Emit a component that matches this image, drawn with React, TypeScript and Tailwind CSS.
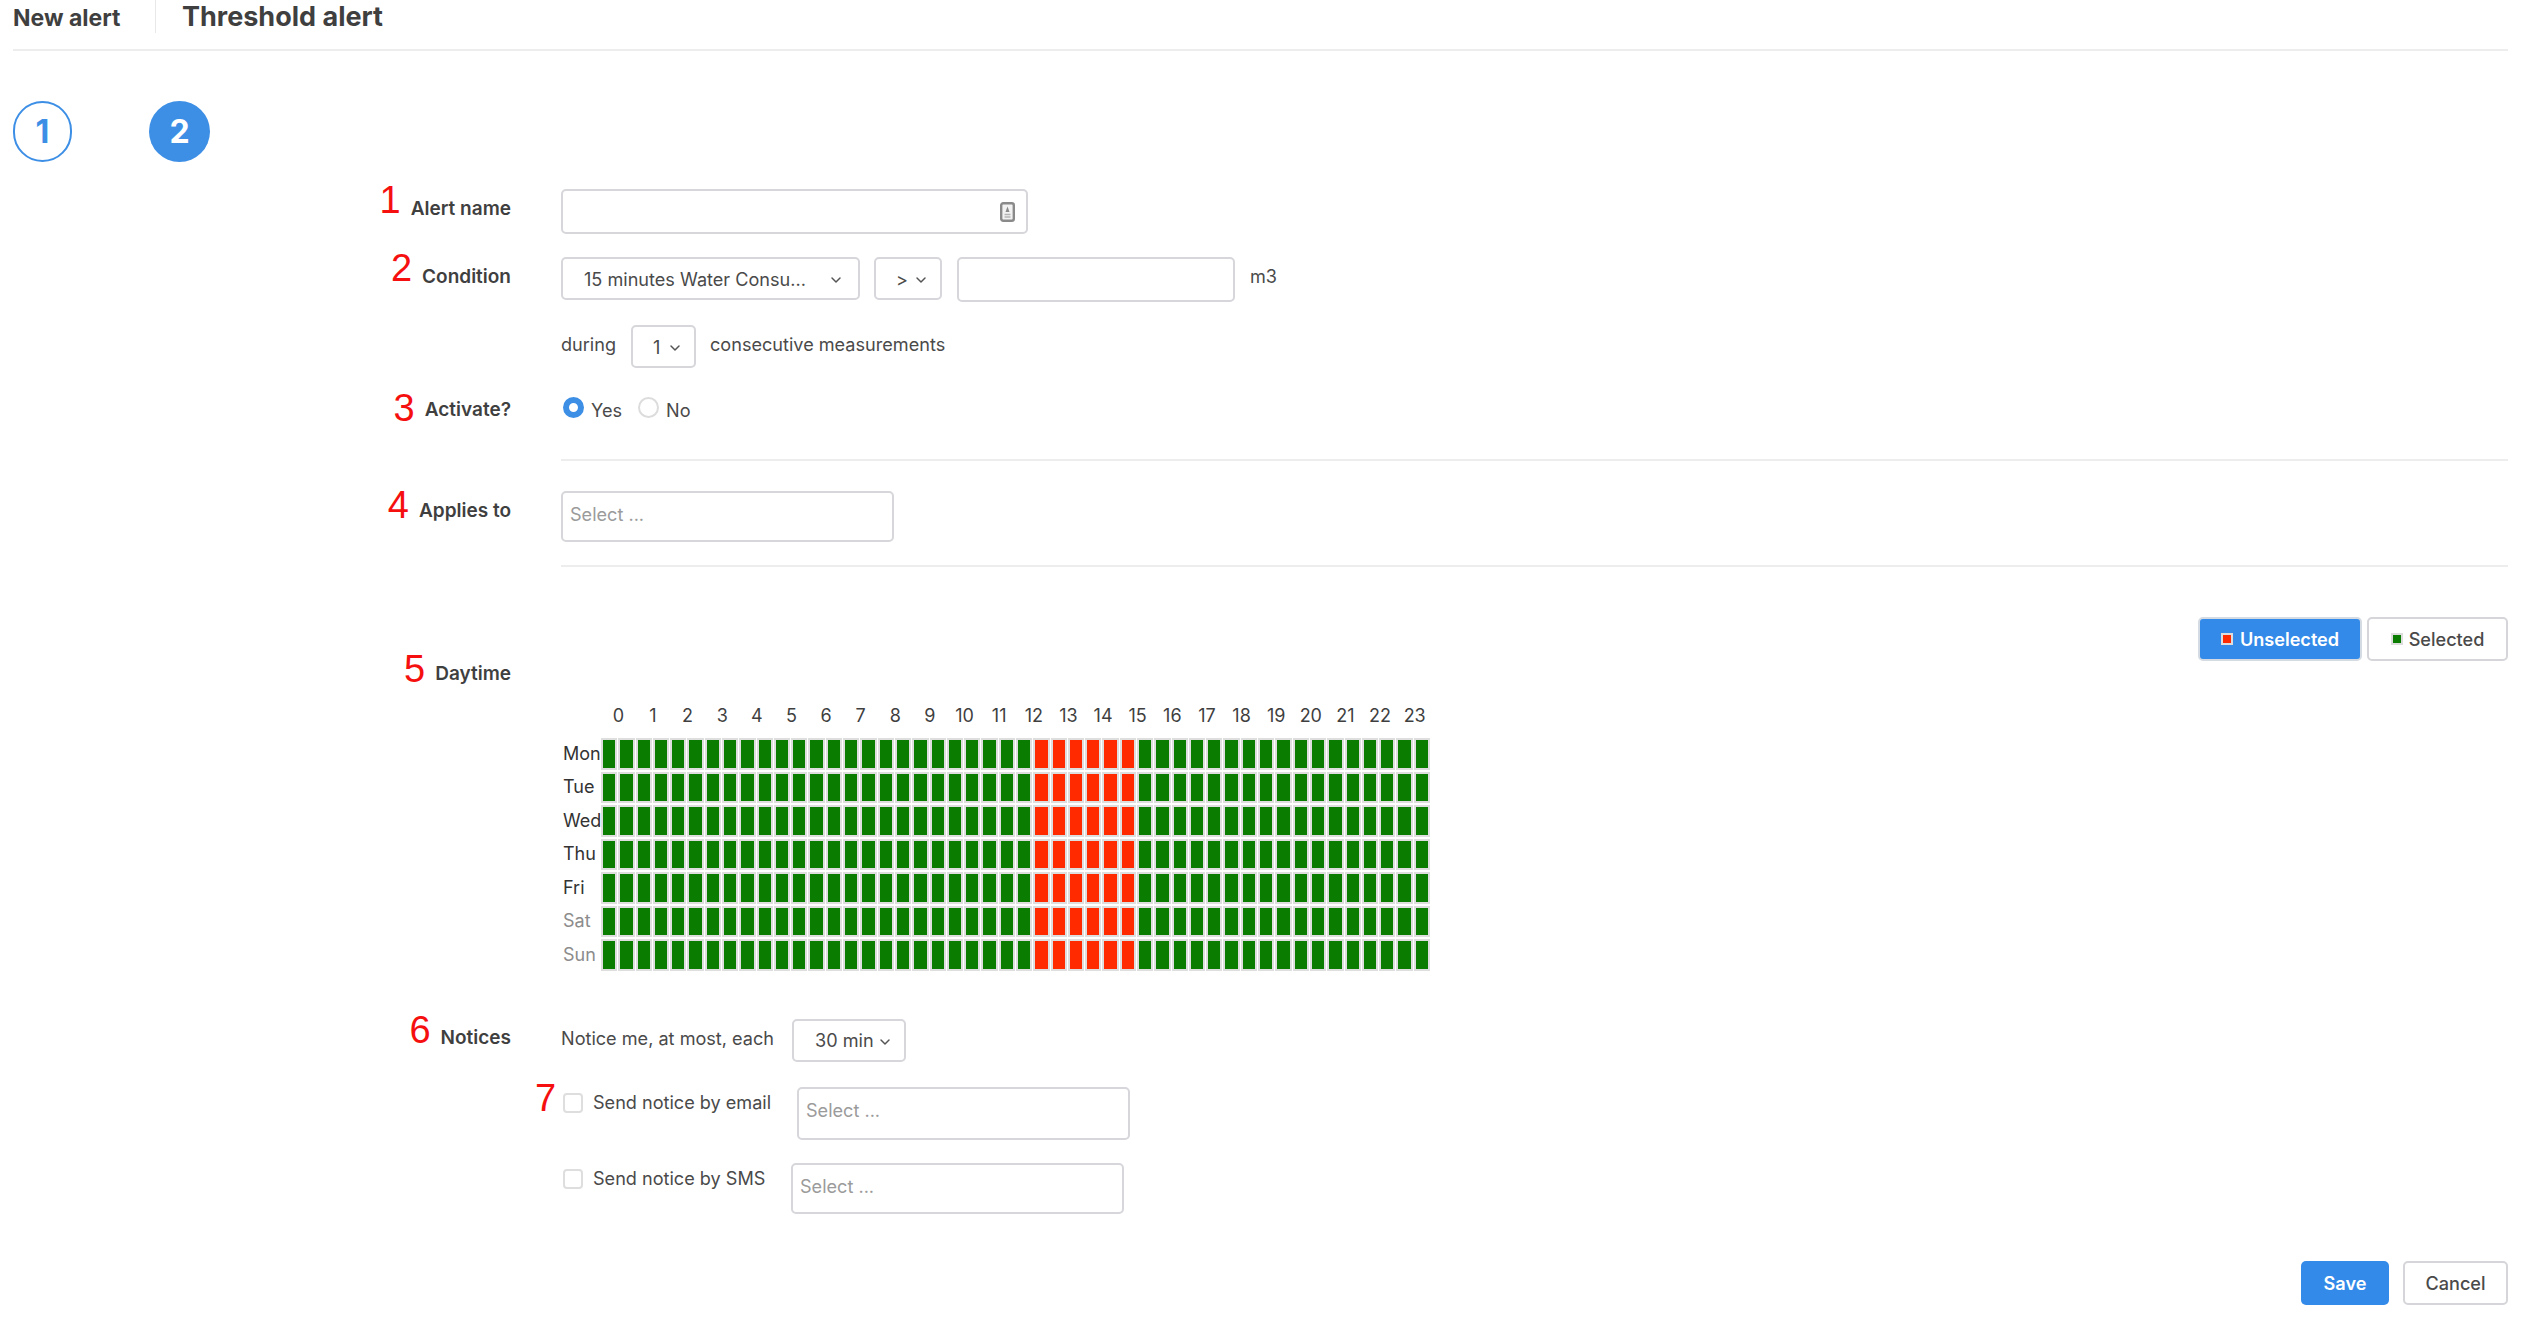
import React from "react";
import { ChevronDown } from "lucide-react";

const inputBox = "rounded-[5px] border-2 border-[#d6d6db] bg-white";

function Label({ n, text, numClass, textClass }: { n: string; text: string; numClass: string; textClass: string }) {
  return (
    <div className="flex w-[498px] shrink-0 items-start justify-end">
      <span className={`text-[38px] leading-[38px] text-[#f50f0f] [font-family:'Liberation_Sans',sans-serif] ${numClass}`}>{n}</span>
      <span className={`ml-[10px] text-[19px] leading-[24px] font-semibold text-[#3f3f3f] ${textClass}`}>{text}</span>
    </div>
  );
}

function Select({ value, className }: { value: string; className: string }) {
  return (
    <div className={`flex items-center ${inputBox} ${className}`}>
      <span className="truncate">{value}</span>
      <ChevronDown className="ml-auto mt-[3px] shrink-0 text-[#555]" size={16} strokeWidth={2.2} />
    </div>
  );
}

function Placeholder({ className }: { className: string }) {
  return (
    <div className={`pl-[7px] pt-[9px] leading-[24px] text-[#9b9b9b] ${inputBox} ${className}`}>Select ...</div>
  );
}

const days = ["Mon", "Tue", "Wed", "Thu", "Fri", "Sat", "Sun"];
const hours = Array.from({ length: 24 }, (_, i) => i);
const halfHours = Array.from({ length: 48 }, (_, i) => i);

function Schedule() {
  return (
    <div className="ml-[2px] w-[869px] text-[18px]">
      <div className="ml-[38px] grid h-[32px] grid-cols-24 items-center text-center leading-[24px] text-[#3f3f3f]">
        {hours.map((h) => (
          <span key={h}>{h}</span>
        ))}
      </div>
      <div className="mt-[6px] flex">
        <div className="grid w-[38px] grid-rows-7 gap-y-[2px] leading-[24px]">
          {days.map((d, i) => (
            <span key={d} className={`flex h-[31.5px] items-center whitespace-nowrap ${i > 4 ? "text-[#8c8c8c]" : "text-[#333]"}`}>{d}</span>
          ))}
        </div>
        <div className="grid w-[829px] grid-cols-48 gap-x-px gap-y-[2px]">
          {days.flatMap((d) =>
            halfHours.map((c) => (
              <div
                key={`${d}-${c}`}
                className={`h-[31.5px] border-2 border-[#dedede] ${c >= 25 && c <= 30 ? "bg-[#ff2a00]" : "bg-[#0a7c00]"}`}
              />
            ))
          )}
        </div>
      </div>
    </div>
  );
}

export default function App() {
  return (
    <div className="h-[1324px] w-full overflow-hidden bg-white pl-[13px] pr-[14px] text-[18.1px] leading-[24px] text-[#4a4a4a] [font-family:Inter,sans-serif]">
      <header className="flex h-[51px] items-start border-b-2 border-[#ededed]">
        <h2 className="mt-[5px] w-[142px] text-[23px] leading-[26px] font-bold text-[#3f3f3f]">New alert</h2>
        <div className="h-[33px] w-px bg-[#e8e8e8]" />
        <h1 className="ml-[26px] mt-[2px] text-[27px] leading-[30px] font-bold text-[#3f3f3f]">Threshold alert</h1>
      </header>

      <div className="mt-[50px] flex gap-[77px]">
        <div className="flex h-[61px] w-[59px] items-center justify-center rounded-full border-2 border-[#3d8fe6] text-[32px] font-bold text-[#3d8fe6]">1</div>
        <div className="flex h-[61px] w-[61px] items-center justify-center rounded-full bg-[#3d8fe6] text-[32px] font-bold text-white">2</div>
      </div>

      <div className="mt-[27px] flex">
        <Label n="1" text="Alert name" numClass="-mt-[8px]" textClass="mt-[8px]" />
        <div className="ml-[50px] flex-1">
          <div className={`flex h-[45px] w-[467px] items-center justify-end pr-[11px] ${inputBox}`}>
            <svg width="15" height="20" viewBox="0 0 15 20">
              <rect x="1.2" y="1.2" width="12.6" height="17.6" rx="2" fill="#f2f2f2" stroke="#8a8a8a" strokeWidth="2.4" />
              <path d="M7.5 4.5 L9.5 10 H5.5 Z" fill="#8a8a8a" />
              <path d="M4.5 12.5 H10.5 M4.5 15 H10.5" stroke="#b5b5b5" strokeWidth="1.4" />
            </svg>
          </div>
        </div>
      </div>

      <div className="mt-[23px] flex">
        <Label n="2" text="Condition" numClass="-mt-[8px]" textClass="mt-[8px]" />
        <div className="ml-[50px] flex flex-1 items-start">
          <Select value="15 minutes Water Consu..." className="h-[43px] w-[299px] pl-[21px] pr-[14px]" />
          <Select value=">" className="ml-[14px] h-[43px] w-[68px] pl-[20px] pr-[11px]" />
          <div className={`ml-[15px] h-[45px] w-[278px] ${inputBox}`} />
          <span className="ml-[15px] mt-[7px]">m3</span>
        </div>
      </div>

      <div className="mt-[23px] flex">
        <div className="w-[498px] shrink-0" />
        <div className="ml-[50px] flex flex-1 items-start">
          <span className="mt-[7px] w-[70px]">during</span>
          <Select value="1" className="h-[43px] w-[65px] pl-[20px] pr-[11px]" />
          <span className="ml-[14px] mt-[7px]">consecutive measurements</span>
        </div>
      </div>

      <div className="mt-[27px] flex items-start">
        <Label n="3" text="Activate?" numClass="-mt-[6px]" textClass="mt-[3px]" />
        <div className="ml-[50px] flex-1">
          <div className="flex h-[66px] items-start border-b-2 border-[#ededed] pt-[2px]">
            <span className="ml-[2px] h-[21px] w-[21px] rounded-full border-[6px] border-[#3d8fe6]" />
            <span className="ml-[7px] mt-[1px]">Yes</span>
            <span className="ml-[16px] h-[21px] w-[21px] rounded-full border-2 border-[#dcdcdc]" />
            <span className="ml-[7px] mt-[1px]">No</span>
          </div>
        </div>
      </div>

      <div className="mt-[30px] flex items-start">
        <Label n="4" text="Applies to" numClass="-mt-[5px]" textClass="mt-[8px]" />
        <div className="ml-[50px] flex-1">
          <Placeholder className="h-[51px] w-[333px]" />
          <div className="mt-[23px] h-[2px] bg-[#ededed]" />
        </div>
      </div>

      <div className="mt-[50px] flex items-start">
        <div className="pt-[36px]">
          <Label n="5" text="Daytime" numClass="-mt-[3px]" textClass="mt-[9px]" />
        </div>
        <div className="ml-[50px] flex-1">
          <div className="flex justify-end gap-[5px]">
            <button className="flex h-[44px] w-[164px] items-center justify-center rounded-[5px] border-2 border-[#d5dbe3] bg-[#338ae8] font-semibold text-white">
              <span className="mr-[7px] h-[12px] w-[12px] border-2 border-[#ddd] bg-[#ff2a00]" />
              Unselected
            </button>
            <button className="flex h-[44px] w-[141px] items-center justify-center rounded-[5px] border-2 border-[#d5d5da] bg-white font-medium text-[#4a4a4a]">
              <span className="mr-[6px] h-[12px] w-[12px] border-2 border-[#ddd] bg-[#0a7c00]" />
              Selected
            </button>
          </div>
          <div className="mt-[39px]">
            <Schedule />
          </div>
        </div>
      </div>

      <div className="mt-[48px] flex items-start">
        <Label n="6" text="Notices" numClass="-mt-[8px]" textClass="mt-[7px]" />
        <div className="ml-[50px] flex flex-1 items-start">
          <span className="mt-[7px] w-[231px] whitespace-nowrap">Notice me, at most, each</span>
          <Select value="30 min" className="h-[43px] w-[114px] pl-[21px] pr-[11px]" />
        </div>
      </div>

      <div className="relative mt-[25px] flex items-start pl-[548px]">
        <span className="absolute left-[522px] -top-[8px] text-[38px] leading-[38px] text-[#f50f0f] [font-family:'Liberation_Sans',sans-serif]">7</span>
        <span className="ml-[2px] mt-[6px] h-[20px] w-[20px] rounded-[4px] border-2 border-[#dedede]" />
        <span className="ml-[10px] mt-[3px] w-[204px] whitespace-nowrap">Send notice by email</span>
        <Placeholder className="h-[53px] w-[333px]" />
      </div>

      <div className="mt-[23px] flex items-start pl-[548px]">
        <span className="ml-[2px] mt-[6px] h-[20px] w-[20px] rounded-[4px] border-2 border-[#dedede]" />
        <span className="ml-[10px] mt-[3px] w-[198px] whitespace-nowrap">Send notice by SMS</span>
        <Placeholder className="h-[51px] w-[333px]" />
      </div>

      <div className="mt-[47px] flex justify-end gap-[14px]">
        <button className="h-[44px] w-[88px] rounded-[5px] bg-[#338ae8] font-semibold text-white">Save</button>
        <button className="h-[44px] w-[105px] rounded-[5px] border-2 border-[#d5d5da] bg-white font-medium text-[#4a4a4a]">Cancel</button>
      </div>
    </div>
  );
}
